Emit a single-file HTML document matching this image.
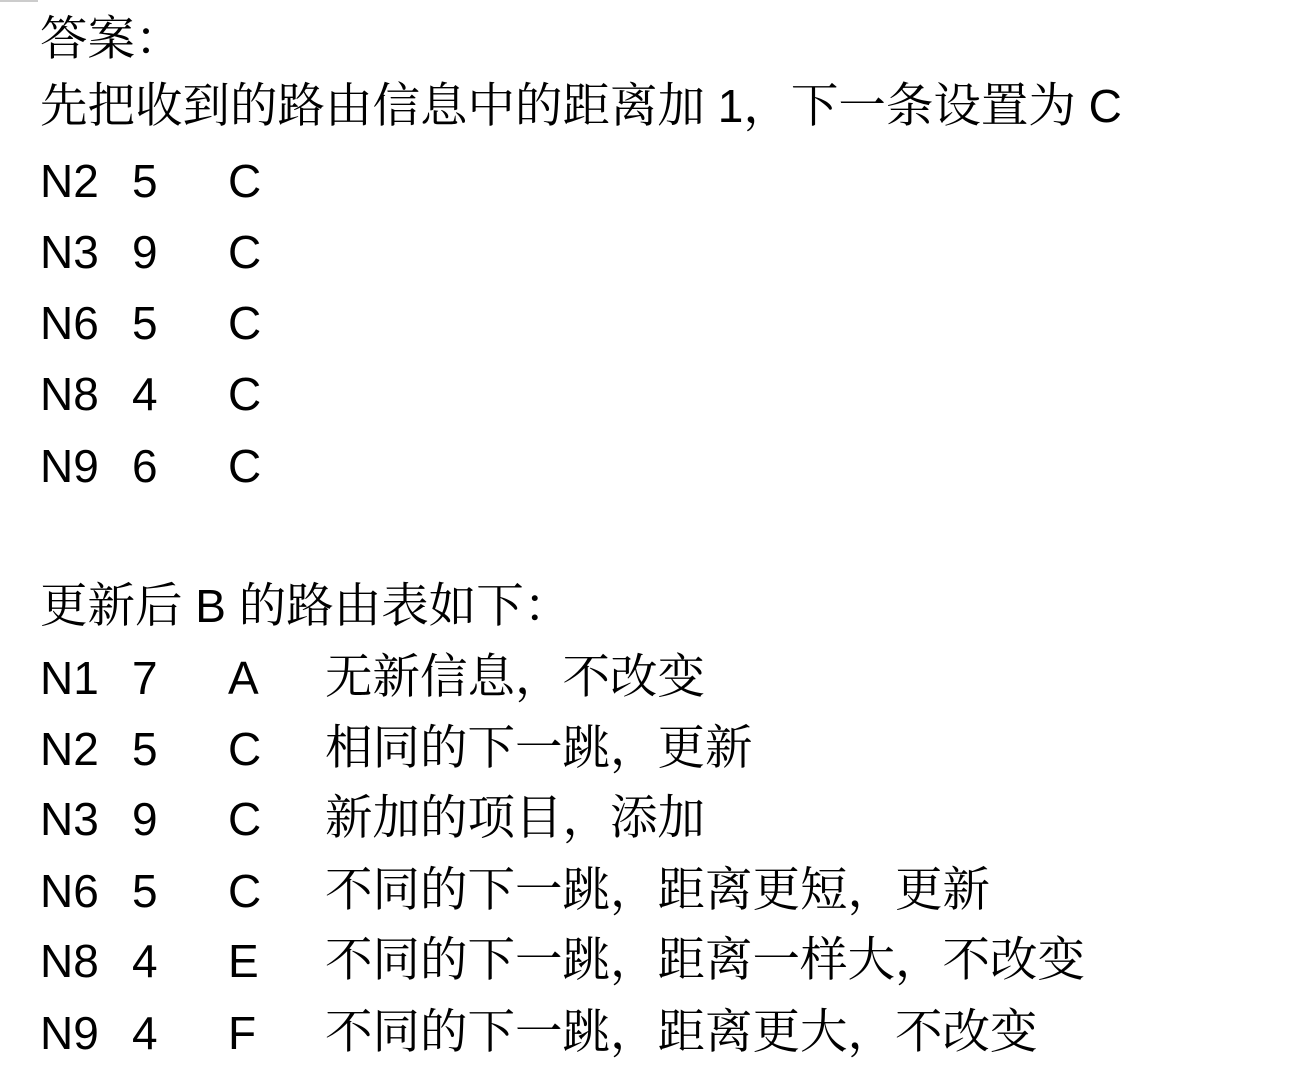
<!DOCTYPE html>
<html><head><meta charset="utf-8"><style>
html,body{margin:0;padding:0;background:#fff;width:1300px;height:1084px;overflow:hidden;position:relative}
.l{position:absolute;left:40px;height:60px;line-height:60px;font-size:46px;color:#000;white-space:nowrap;font-family:"Liberation Sans","Noto Serif CJK SC",serif}
.z{font-size:47.5px}
.c{position:absolute;top:0}
.a{left:0}.b{left:92px}.d{left:188px}.e{left:285px;font-size:47.5px}
.corner{position:absolute;left:0;top:0;width:38px;height:2px;background:#ccc}
</style></head><body>
<div class="corner"></div>
<div class="l" style="top:9px"><span class="z">答案：</span></div>
<div class="l" style="top:76px"><span class="z">先把收到的路由信息中的距离加</span> 1<span class="z">，下一条设置为</span> C</div>
<div class="l" style="top:151px"><span class="c a">N2</span><span class="c b">5</span><span class="c d">C</span></div>
<div class="l" style="top:222px"><span class="c a">N3</span><span class="c b">9</span><span class="c d">C</span></div>
<div class="l" style="top:293px"><span class="c a">N6</span><span class="c b">5</span><span class="c d">C</span></div>
<div class="l" style="top:364px"><span class="c a">N8</span><span class="c b">4</span><span class="c d">C</span></div>
<div class="l" style="top:436px"><span class="c a">N9</span><span class="c b">6</span><span class="c d">C</span></div>
<div class="l" style="top:576px"><span class="z">更新后</span> B <span class="z">的路由表如下：</span></div>
<div class="l" style="top:648px"><span class="c a">N1</span><span class="c b">7</span><span class="c d">A</span><span class="c e">无新信息，不改变</span></div>
<div class="l" style="top:719px"><span class="c a">N2</span><span class="c b">5</span><span class="c d">C</span><span class="c e">相同的下一跳，更新</span></div>
<div class="l" style="top:789px"><span class="c a">N3</span><span class="c b">9</span><span class="c d">C</span><span class="c e">新加的项目，添加</span></div>
<div class="l" style="top:861px"><span class="c a">N6</span><span class="c b">5</span><span class="c d">C</span><span class="c e">不同的下一跳，距离更短，更新</span></div>
<div class="l" style="top:931px"><span class="c a">N8</span><span class="c b">4</span><span class="c d">E</span><span class="c e">不同的下一跳，距离一样大，不改变</span></div>
<div class="l" style="top:1003px"><span class="c a">N9</span><span class="c b">4</span><span class="c d">F</span><span class="c e">不同的下一跳，距离更大，不改变</span></div>
</body></html>
